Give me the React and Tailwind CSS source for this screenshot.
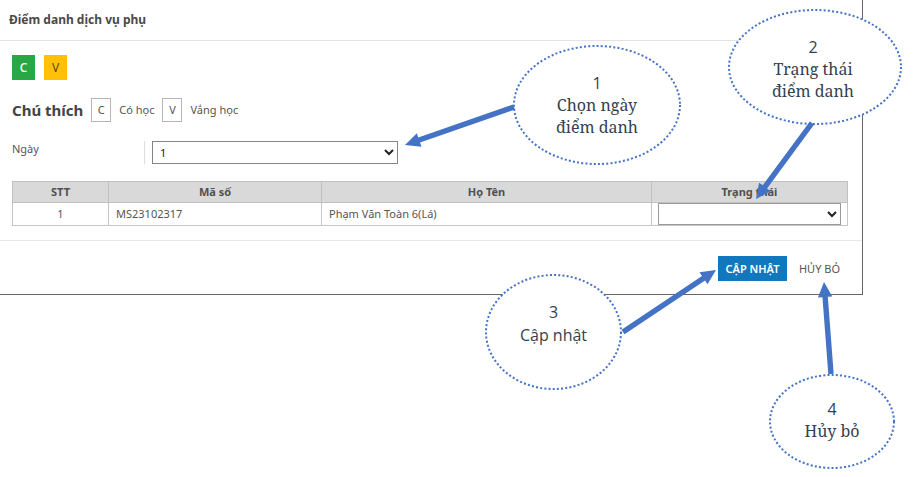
import React from "react";

const columns = ["STT", "Mã số", "Họ Tên", "Trạng thái"];

const students = [{ index: 1, code: "MS23102317", name: "Phạm Văn Toàn 6(Lá)" }];

function LegendKey({ children }) {
  return (
    <span className="flex h-6 w-5 shrink-0 items-center justify-center border border-[#b5b5b5]">
      {children}
    </span>
  );
}

function Callout({ number, lines, width, height, serif, className }) {
  return (
    <div
      className={`absolute flex flex-col items-center justify-center text-center text-base text-[#333f50] ${className}`}
    >
      <svg className="absolute inset-0 h-full w-full" viewBox={`0 0 ${width} ${height}`} aria-hidden="true">
        <ellipse
          cx={width / 2}
          cy={height / 2}
          rx={width / 2 - 1}
          ry={height / 2 - 1}
          fill="#fff"
          stroke="#4472c4"
          strokeWidth="2"
          strokeDasharray="2 2.2"
        />
      </svg>
      <span className="relative font-['Open_Sans',sans-serif] leading-[22px]">{number}</span>
      {lines.map((line) => (
        <span
          key={line}
          className={
            serif
              ? "relative font-['Noto_Serif','DejaVu_Serif_Condensed','DejaVu_Serif',serif] leading-[22px]"
              : "relative font-['Open_Sans',sans-serif] leading-6"
          }
        >
          {line}
        </span>
      ))}
    </div>
  );
}

function Arrow({ from, to }) {
  const [x1, y1] = from;
  const [x2, y2] = to;
  const length = Math.hypot(x2 - x1, y2 - y1);
  const angle = (Math.atan2(y2 - y1, x2 - x1) * 180) / Math.PI;
  return (
    <g transform={`translate(${x1} ${y1}) rotate(${angle})`} fill="#4472c4">
      <path d={`M0 -2.7H${length - 15}V-7.2L${length} 0L${length - 15} 7.2V2.7H0Z`} />
    </g>
  );
}

export default function App() {
  return (
    <main className="relative min-h-screen overflow-hidden bg-white font-['Noto_Sans',sans-serif] text-[11px] leading-4 text-[#555]">
      <section className="mr-[59px] border-r border-b border-[#666]">
        <header className="flex h-[41px] items-center border-b border-[#e3e3e3] px-[9px]">
          <h1 className="text-xs font-bold text-[#4a4a4a]">Điểm danh dịch vụ phụ</h1>
        </header>

        <div className="px-3 pt-[14px] pb-[14px] pr-[14px]">
          <div className="flex gap-[9px]">
            <button type="button" className="h-[25px] w-[23px] bg-[#28a745] text-xs font-medium text-white">
              C
            </button>
            <button type="button" className="h-[25px] w-[23px] bg-[#ffc107] text-xs text-[#5c4a1c]">
              V
            </button>
          </div>

          <div className="mt-[18px] flex items-center">
            <h2 className="mr-2 text-[15px] leading-5 font-bold text-[#444]">Chú thích</h2>
            <LegendKey>C</LegendKey>
            <span className="mx-2">Có học</span>
            <LegendKey>V</LegendKey>
            <span className="mx-2">Vắng học</span>
          </div>

          <div className="mt-[19px] flex">
            <label htmlFor="day" className="w-[133px] border-r border-[#ddd]">
              Ngày
            </label>
            <select
              id="day"
              className="ml-[7px] h-[23px] w-[246px] border border-[#858585] bg-white pl-[3px] text-[#222]"
              defaultValue="1"
            >
              <option>1</option>
            </select>
          </div>

          <table className="mt-[17px] w-full table-fixed border-collapse border border-[#c6c6c6]">
            <colgroup>
              <col className="w-[96px]" />
              <col className="w-[213px]" />
              <col />
              <col className="w-[196px]" />
            </colgroup>
            <thead className="bg-[#d9d9d9]">
              <tr className="h-[21px]">
                {columns.map((column) => (
                  <th key={column} scope="col" className="border border-[#c0c0c0] p-0 font-bold text-[#505050]">
                    {column}
                  </th>
                ))}
              </tr>
            </thead>
            <tbody>
              {students.map((student) => (
                <tr key={student.code} className="h-[23px]">
                  <td className="border border-[#c6c6c6] p-0 text-center">{student.index}</td>
                  <td className="border border-[#c6c6c6] px-[7px] py-0">{student.code}</td>
                  <td className="border border-[#c6c6c6] px-[7px] py-0">{student.name}</td>
                  <td className="border border-[#c6c6c6] px-[6px] py-0">
                    <select
                      aria-label={`Trạng thái ${student.name}`}
                      className="block h-[22px] w-full border border-[#999] bg-white text-[#222]"
                      defaultValue=""
                    >
                      <option value=""></option>
                      <option value="C">Có học</option>
                      <option value="V">Vắng học</option>
                    </select>
                  </td>
                </tr>
              ))}
            </tbody>
          </table>
        </div>

        <footer className="flex justify-end gap-3 border-t border-[#e6e6e6] pt-[15px] pr-[22px] pb-[13px]">
          <button type="button" className="h-[25px] w-[69px] bg-[#1278be] font-semibold text-white">
            CẬP NHẬT
          </button>
          <button type="button" className="h-[25px] text-[#555]">
            HỦY BỎ
          </button>
        </footer>
      </section>

      <Callout
        number={1}
        lines={["Chọn ngày", "điểm danh"]}
        width={168}
        height={120}
        serif
        className="top-[45px] left-[513px] h-[120px] w-[168px]"
      />
      <Callout
        number={2}
        lines={["Trạng thái", "điểm danh"]}
        width={174}
        height={116}
        serif
        className="top-[9px] left-[728px] h-[116px] w-[174px] pt-1 pr-1"
      />
      <Callout
        number={3}
        lines={["Cập nhật"]}
        width={137}
        height={116}
        className="top-[274px] left-[485px] h-[116px] w-[137px] pb-4"
      />
      <Callout
        number={4}
        lines={["Hủy bỏ"]}
        width={126}
        height={95}
        serif
        className="top-[374px] left-[769px] h-[95px] w-[126px] pb-1"
      />

      <svg
        className="pointer-events-none absolute top-0 left-0 h-[477px] w-[922px]"
        viewBox="0 0 922 477"
        aria-hidden="true"
      >
        <Arrow from={[514, 107]} to={[405, 145]} />
        <Arrow from={[812, 123]} to={[756, 199]} />
        <Arrow from={[623, 332]} to={[716, 270]} />
        <Arrow from={[831, 374]} to={[824, 282]} />
      </svg>
    </main>
  );
}
